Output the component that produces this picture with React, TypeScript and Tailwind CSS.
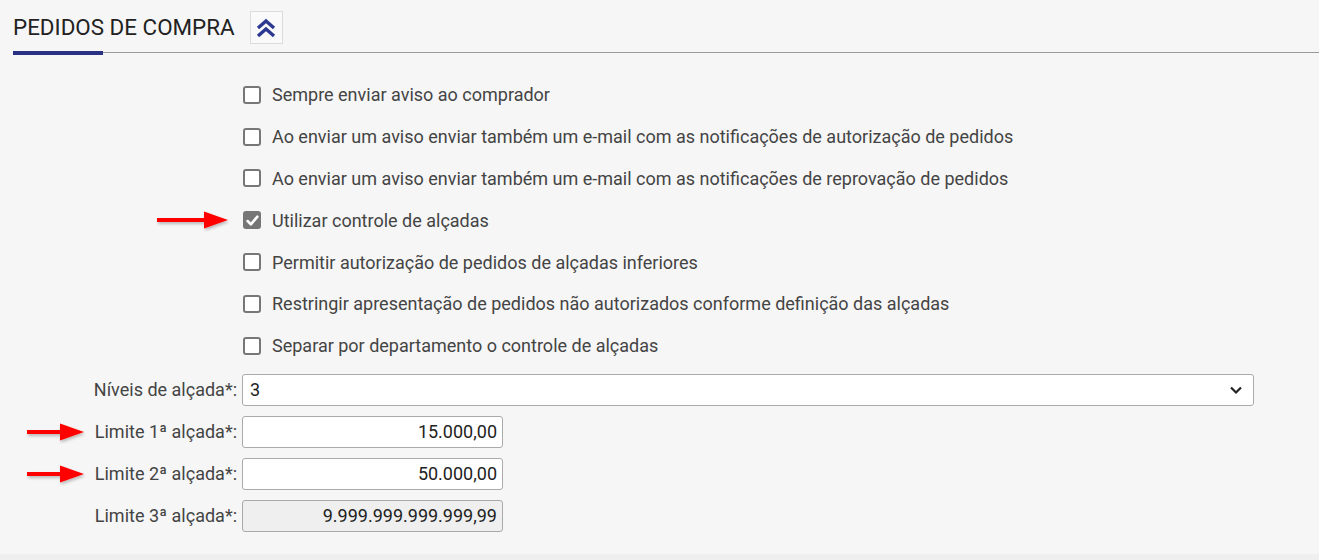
import { useState } from "react";

const opcoes = [
  { label: "Sempre enviar aviso ao comprador", checked: false },
  { label: "Ao enviar um aviso enviar também um e-mail com as notificações de autorização de pedidos", checked: false },
  { label: "Ao enviar um aviso enviar também um e-mail com as notificações de reprovação de pedidos", checked: false },
  { label: "Utilizar controle de alçadas", checked: true, arrow: true },
  { label: "Permitir autorização de pedidos de alçadas inferiores", checked: false },
  { label: "Restringir apresentação de pedidos não autorizados conforme definição das alçadas", checked: false },
  { label: "Separar por departamento o controle de alçadas", checked: false },
];

// seta vermelha de anotação (len = comprimento total)
function RedArrow({ className, len }: { className?: string; len: number }) {
  const head = 24;
  return (
    <svg className={className} width={len + 6} height="24" viewBox={`0 0 ${len + 6} 24`}>
      <defs>
        <filter id="sh" x="-20%" y="-50%" width="140%" height="200%">
          <feDropShadow dx="1" dy="2" stdDeviation="1.5" floodColor="#000" floodOpacity="0.25" />
        </filter>
      </defs>
      <g filter="url(#sh)">
        <rect x="1" y="10" width={len - head + 1} height="4" fill="#ff0000" />
        <polygon points={`${len - head},3.5 ${len},12 ${len - head},20.5`} fill="#ff0000" />
      </g>
    </svg>
  );
}

function Checkbox({ checked }: { checked: boolean }) {
  if (checked) {
    return (
      <span className="w-[18px] h-[18px] rounded-[3px] bg-[#767676] flex items-center justify-center shrink-0">
        <svg width="13" height="13" viewBox="0 0 12 12">
          <polyline points="1.5,6.5 4.5,9.5 10.5,2.5" fill="none" stroke="#fff" strokeWidth="2.4" strokeLinecap="round" strokeLinejoin="round" />
        </svg>
      </span>
    );
  }
  return <span className="w-[18px] h-[18px] rounded-[3px] border-2 border-[#777] bg-white shrink-0" />;
}

export default function App() {
  const [aberto] = useState(true);

  return (
    <div className="h-[560px] bg-[#efefef] font-['Roboto',sans-serif]">
      <div className="h-[554px] bg-[#f6f6f6] pl-[13px]">
        <div className="flex items-center gap-[15px] pt-[11px] pb-[7px]">
          <h1 className="text-[22.4px] leading-[33px] text-[#222]">PEDIDOS DE COMPRA</h1>
          <button className="w-[33px] h-[33px] border border-[#dcdcdc] bg-[#fafafa] flex items-center justify-center">
            {aberto && (
              <svg width="22" height="22" viewBox="0 0 22 22">
                <polyline points="3,11 11,4 19,11" fill="none" stroke="#2c3990" strokeWidth="3.4" strokeLinejoin="miter" />
                <polyline points="3,19 11,12 19,19" fill="none" stroke="#2c3990" strokeWidth="3.4" strokeLinejoin="miter" />
              </svg>
            )}
          </button>
        </div>
        <div className="flex items-start">
          <div className="w-[90px] h-[4px] bg-[#283184]" />
          <div className="flex-1 h-px mt-px bg-[#9a9a9a]" />
        </div>

        <div className="mt-[19px] pl-[230px]">
          {opcoes.map((o) => (
            <div key={o.label} className="relative h-[41.8px] flex items-center gap-[11px]">
              {o.arrow && <RedArrow len={72} className="absolute left-[-87px] top-[9px]" />}
              <Checkbox checked={o.checked} />
              <span className="text-[18px] text-[#444]">{o.label}</span>
            </div>
          ))}
        </div>

        <div className="mt-[7px] flex flex-col gap-[10px] text-[18px]">
          <div className="flex items-center gap-[5px]">
            <label className="w-[224px] text-right text-[#444]">Níveis de alçada*:</label>
            <div className="w-[1012px] h-[32px] bg-white border border-[#aaa] rounded-[3px] flex items-center justify-between pl-[7px] pr-[10px] text-[#222]">
              <span>3</span>
              <svg width="14" height="10" viewBox="0 0 14 10">
                <polyline points="2,2.5 7,7.5 12,2.5" fill="none" stroke="#222" strokeWidth="2.2" />
              </svg>
            </div>
          </div>
          {[
            { label: "Limite 1ª alçada*:", valor: "15.000,00", arrow: true },
            { label: "Limite 2ª alçada*:", valor: "50.000,00", arrow: true },
            { label: "Limite 3ª alçada*:", valor: "9.999.999.999.999,99", disabled: true },
          ].map((l) => (
            <div key={l.label} className="relative flex items-center gap-[5px]">
              {l.arrow && <RedArrow len={58} className="absolute left-[13px] top-[4px]" />}
              <label className="w-[224px] text-right text-[#444]">{l.label}</label>
              <div
                className={
                  l.disabled
                    ? "w-[261px] h-[32px] bg-[#efefef] border border-[#aaa] rounded-[3px] flex items-center justify-end pr-[5px] text-[#222]"
                    : "w-[261px] h-[32px] bg-white border border-[#aaa] rounded-[3px] flex items-center justify-end pr-[5px] text-[#222]"
                }
              >
                {l.valor}
              </div>
            </div>
          ))}
        </div>
      </div>
    </div>
  );
}
